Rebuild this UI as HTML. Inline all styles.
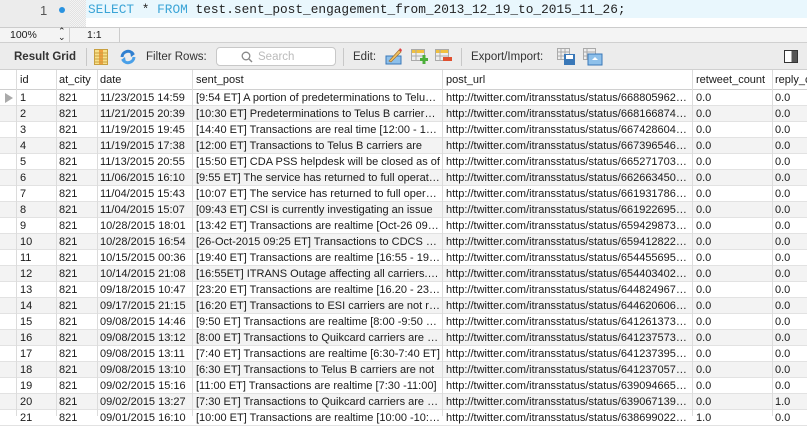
<!DOCTYPE html>
<html><head><meta charset="utf-8"><style>
*{margin:0;padding:0;box-sizing:border-box}
body{width:807px;height:416px;overflow:hidden;background:#fff;font-family:"Liberation Sans",sans-serif;font-size:12px;color:#1a1a1a;position:relative}
.ed{position:absolute;left:0;top:0;width:807px;height:27px;background:#fff}
.gut{position:absolute;left:0;top:0;width:70px;height:27px;background:#ececec}
.dot{position:absolute;left:70px;top:0;width:16px;height:27px;background:repeating-conic-gradient(#e2e2e2 0 25%,#f4f4f4 0 50%) 0 0/2px 2px}
.hl{position:absolute;left:86px;top:0;width:721px;height:18px;background:#e9f7fd}
.sql{position:absolute;left:88px;top:2px;font-family:"Liberation Mono",monospace;font-size:12.8px;color:#222;white-space:pre}
.kw{color:#3ba4d6}
.ln{position:absolute;left:40px;top:3px;font-size:13px;color:#555}
.bd{position:absolute;left:59px;top:7px;width:6px;height:6px;border-radius:50%;background:#2a93e0}
.st{position:absolute;left:0;top:27px;width:807px;height:16px;background:#f4f4f4;border-top:1px solid #ccc;border-bottom:1px solid #d0d0d0;font-size:10.5px}
.tb{position:absolute;left:0;top:43px;width:807px;height:27px;background:#ececec;border-bottom:1px solid #d0d0d0;font-size:11.5px}
.t{position:absolute;white-space:nowrap}
.grid{position:absolute;left:0;top:70px;width:807px;font-size:11px}
.row{position:absolute;left:0;width:807px;height:16px;border-bottom:1px solid #e2e2e2}
.row.g{background:#f3f3f3}
.c{position:absolute;top:1px;white-space:nowrap;overflow:hidden;text-overflow:ellipsis;height:15px;line-height:15px}
.v{position:absolute;top:0;width:1px;background:#dcdcdc;height:346px}
</style></head><body>
<div class="ed"><div class="gut"></div><div class="dot"></div><div class="hl"></div>
<div class="ln">1</div><div class="bd"></div>
<div class="sql"><span class="kw">SELECT</span> * <span class="kw">FROM</span> test.sent_post_engagement_from_2013_12_19_to_2015_11_26;</div></div>
<div class="st"><span class="t" style="left:10px;top:1px">100%</span><span class="t" style="left:58px;top:0px;font-size:9px;line-height:6px">⌃<br>⌄</span>
<div style="position:absolute;left:69px;top:0;width:1px;height:14px;background:#ccc"></div>
<span class="t" style="left:87px;top:1px">1:1</span>
<div style="position:absolute;left:119px;top:0;width:1px;height:14px;background:#ccc"></div></div>
<div class="tb">
<span class="t" style="left:14px;top:8px;font-weight:bold;color:#333">Result Grid</span>
<div style="position:absolute;left:86px;top:5px;width:1px;height:18px;background:#c8c8c8"></div>
<svg style="position:absolute;left:94px;top:6px" width="14" height="16"><rect x="0.5" y="0.5" width="13" height="15" fill="#f7e08a" stroke="#c8a040"/><rect x="5" y="1" width="4" height="14" fill="#f0a040"/><path d="M0 4H14M0 7H14M0 10H14M0 13H14" stroke="#c8a040"/></svg>
<svg style="position:absolute;left:120px;top:6px" width="16" height="16"><path d="M2 8A6 6 0 0 1 13 5" stroke="#2f7fd0" stroke-width="3" fill="none"/><path d="M14 8A6 6 0 0 1 3 11" stroke="#4aa0e8" stroke-width="3" fill="none"/><path d="M10 2L15 5L11 8Z" fill="#2f7fd0"/><path d="M6 14L1 11L5 8Z" fill="#4aa0e8"/></svg>
<span class="t" style="left:146px;top:8px;color:#333">Filter Rows:</span>
<div style="position:absolute;left:216px;top:4px;width:120px;height:19px;background:#fff;border:1px solid #c8c8c8;border-radius:4px"><span class="t" style="left:41px;top:3px;color:#bbb">Search</span>
<svg style="position:absolute;left:24px;top:3px" width="12" height="12"><circle cx="5" cy="5" r="3.8" stroke="#888" stroke-width="1.3" fill="none"/><path d="M8 8L11 11" stroke="#888" stroke-width="1.4"/></svg></div>
<div style="position:absolute;left:343px;top:5px;width:1px;height:18px;background:#c8c8c8"></div>
<span class="t" style="left:353px;top:8px;color:#333">Edit:</span>
<svg style="position:absolute;left:385px;top:4px" width="18" height="18"><rect x="1" y="9" width="15" height="8" fill="#8ec0ea" stroke="#3a78b8"/><path d="M4 14L14 3L16 5L6 15Z" fill="#f0c060" stroke="#a07030" stroke-width=".7"/><path d="M14 3L15 1L17 3L16 5Z" fill="#e04040"/></svg>
<svg style="position:absolute;left:411px;top:6px" width="18" height="16"><rect x="0.5" y="0.5" width="13" height="11" fill="#eee" stroke="#aaa"/><rect x="1" y="1" width="12" height="3" fill="#f0c040"/><path d="M0 7H14M5 0V12" stroke="#aaa"/><path d="M13 6V15M9 10.5H17" stroke="#4caf3a" stroke-width="3"/></svg>
<svg style="position:absolute;left:435px;top:6px" width="18" height="16"><rect x="0.5" y="0.5" width="13" height="11" fill="#eee" stroke="#aaa"/><rect x="1" y="1" width="12" height="3" fill="#f0c040"/><path d="M0 7H14M5 0V12" stroke="#aaa"/><rect x="8" y="8" width="9" height="4" fill="#e05030"/></svg>
<div style="position:absolute;left:461px;top:5px;width:1px;height:18px;background:#c8c8c8"></div>
<span class="t" style="left:471px;top:8px;color:#333">Export/Import:</span>
<svg style="position:absolute;left:557px;top:5px" width="20" height="18"><rect x="0.5" y="0.5" width="12" height="11" fill="#eee" stroke="#aaa"/><path d="M0 4H12M0 8H12M4 0V12M8 0V12" stroke="#aaa"/><rect x="7" y="6" width="11" height="11" fill="#3a78b8"/><rect x="9" y="7" width="7" height="4" fill="#fff"/></svg>
<svg style="position:absolute;left:583px;top:5px" width="20" height="18"><rect x="0.5" y="0.5" width="12" height="11" fill="#eee" stroke="#aaa"/><path d="M0 4H12M0 8H12M4 0V12" stroke="#aaa"/><rect x="5" y="6" width="14" height="11" fill="#8ec0ea" stroke="#3a78b8"/><path d="M12 9L9 12H15Z" fill="#fff"/></svg>
<div style="position:absolute;left:784px;top:7px;width:14px;height:13px;border:1.5px solid #333;background:linear-gradient(90deg,#fff 55%,#555 55%)"></div>
</div>
<div class="grid">
<div class="row" style="top:0;height:20px;background:#fff;border-bottom:1px solid #d0d0d0">
<span class="c" style="left:20px;top:3px">id</span><span class="c" style="left:59px;top:3px">at_city</span><span class="c" style="left:100px;top:3px">date</span><span class="c" style="left:196px;top:3px">sent_post</span><span class="c" style="left:446px;top:3px">post_url</span><span class="c" style="left:696px;top:3px;width:75px;text-overflow:clip">retweet_count</span><span class="c" style="left:775px;top:3px;text-overflow:clip">reply_c</span></div>
<div id="rows"></div>
<div class="v" style="left:16px"></div><div class="v" style="left:56px"></div><div class="v" style="left:97px"></div><div class="v" style="left:192px"></div><div class="v" style="left:442px"></div><div class="v" style="left:692px"></div><div class="v" style="left:772px"></div>
<div style="position:absolute;left:5px;top:23px;width:0;height:0;border-top:5px solid transparent;border-bottom:5px solid transparent;border-left:8px solid #aaa"></div>
</div>
<script>
var d=[["11/23/2015 14:59","[9:54 ET] A portion of predeterminations to Telus B carriers","668805962"],
["11/21/2015 20:39","[10:30 ET] Predeterminations to Telus B carriers are","668166874"],
["11/19/2015 19:45","[14:40 ET] Transactions are real time [12:00  - 14:40]","667428604"],
["11/19/2015 17:38","[12:00 ET] Transactions to Telus B carriers are","667396546"],
["11/13/2015 20:55","[15:50 ET] CDA PSS helpdesk will be closed as of","665271703"],
["11/06/2015 16:10","[9:55 ET] The service has returned to full operation","662663450"],
["11/04/2015 15:43","[10:07 ET] The service has returned to full operation","661931786"],
["11/04/2015 15:07","[09:43 ET] CSI is currently investigating an issue","661922695"],
["10/28/2015 18:01","[13:42 ET] Transactions are realtime [Oct-26 09:25]","659429873"],
["10/28/2015 16:54","[26-Oct-2015 09:25 ET] Transactions to CDCS carriers","659412822"],
["10/15/2015 00:36","[19:40 ET] Transactions are realtime [16:55 - 19:40]","654455695"],
["10/14/2015 21:08","[16:55ET] ITRANS Outage affecting all carriers. Trans","654403402"],
["09/18/2015 10:47","[23:20 ET] Transactions are realtime [16.20 - 23.20]","644824967"],
["09/17/2015 21:15","[16:20 ET] Transactions to ESI carriers are not realtime","644620606"],
["09/08/2015 14:46","[9:50 ET] Transactions are realtime [8:00 -9:50 ET]","641261373"],
["09/08/2015 13:12","[8:00 ET] Transactions to Quikcard carriers are not","641237573"],
["09/08/2015 13:11","[7:40 ET] Transactions are realtime [6:30-7:40 ET]","641237395"],
["09/08/2015 13:10","[6:30 ET] Transactions to Telus B carriers are not","641237057"],
["09/02/2015 15:16","[11:00 ET] Transactions are realtime [7:30 -11:00]","639094665"],
["09/02/2015 13:27","[7:30 ET] Transactions to Quikcard carriers are not","639067139"],
["09/01/2015 16:10","[10:00 ET] Transactions are realtime [10:00 -10:30]","638699022"]];
var h="";d.forEach(function(r,i){var rt=i==20?"1.0":"0.0",rp=i==19?"1.0":"0.0";
h+='<div class="row'+(i%2?' g':'')+'" style="top:'+(20+i*16)+'px"><span class="c" style="left:20px">'+(i+1)+'</span><span class="c" style="left:59px">821</span><span class="c" style="left:100px">'+r[0]+'</span><span class="c" style="left:196px;width:244px">'+r[1]+'</span><span class="c" style="left:446px;width:244px">http://twitter.com/itransstatus/status/'+r[2]+'12345678</span><span class="c" style="left:696px">'+rt+'</span><span class="c" style="left:775px">'+rp+'</span></div>';});
document.getElementById("rows").innerHTML=h;
</script>
</body></html>
